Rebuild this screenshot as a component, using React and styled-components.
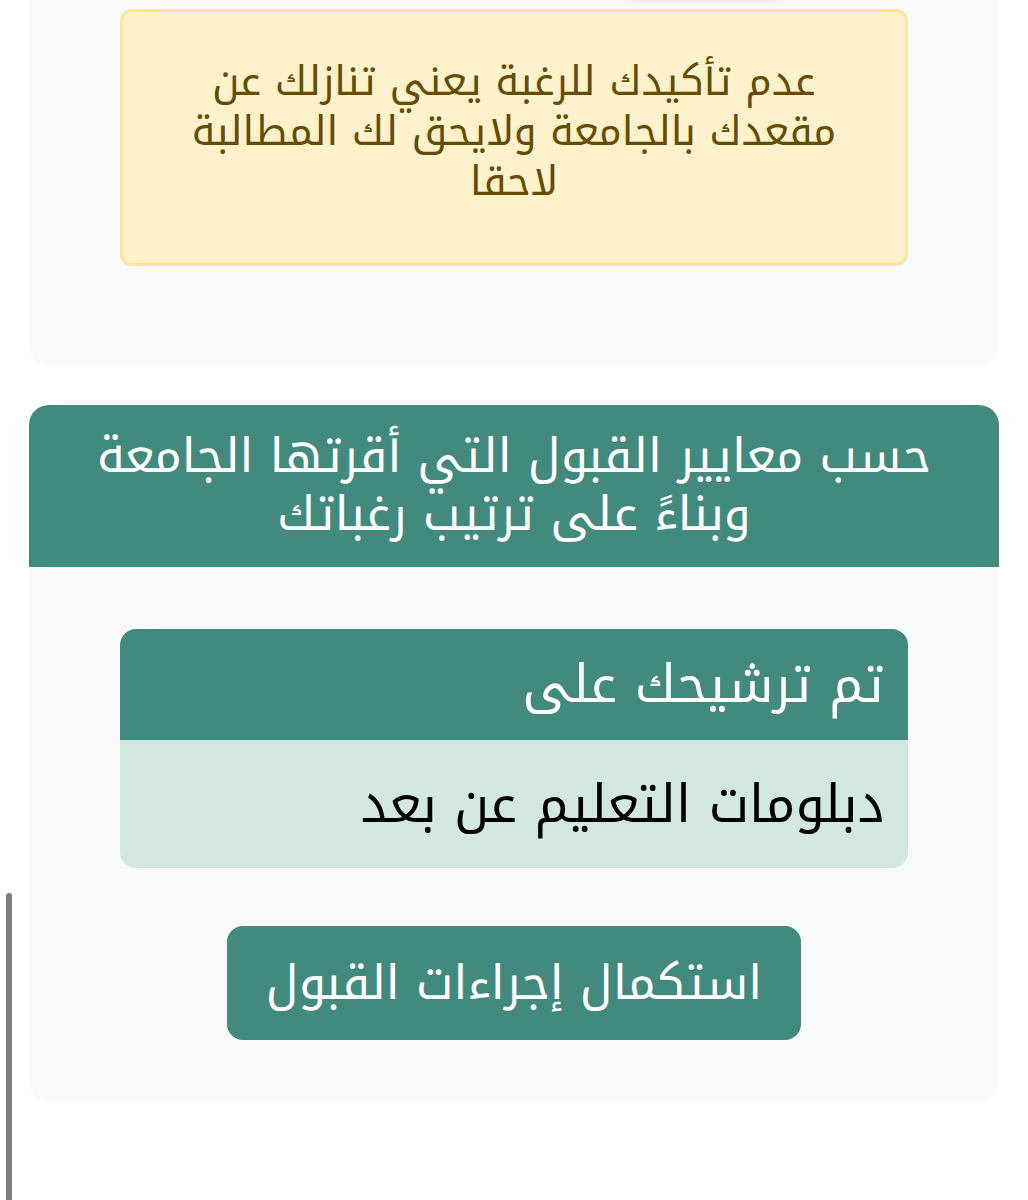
import styled, { createGlobalStyle } from 'styled-components';

const font = `"Noto Kufi Arabic", "DejaVu Sans", sans-serif`;

const GlobalStyle = createGlobalStyle`
  html, body {
    margin: 0;
    padding: 0;
    background: #ffffff;
  }
  body {
    font-family: ${font};
    direction: rtl;
    overflow: hidden;
  }
`;

const Page = styled.div`
  width: 1028px;
  height: 1200px;
  box-sizing: border-box;
  padding: 0 29px;
  display: flex;
  flex-direction: column;
  gap: 39px;
  position: relative;
`;

const Card = styled.div`
  background: #f8f9fb;
  border-radius: 20px;
  box-sizing: border-box;
`;

const TopCard = styled(Card)`
  margin-top: -60px;
  padding: 0 91px 100px;
  display: flex;
  flex-direction: column;
  align-items: center;
`;

const HiddenButton = styled.div`
  width: 160px;
  height: 56px;
  margin-left: 380px;
  margin-bottom: 13px;
  background: #f3f4f7;
  border-radius: 10px;
  box-shadow: 0 3px 6px rgba(0, 0, 0, 0.18);
`;

const Alert = styled.div`
  align-self: stretch;
  background: #fef2cc;
  border: 3px solid #fde59c;
  border-radius: 12px;
  padding: 45px 50px 56px;
  color: #664d03;
  font-size: 40.5px;
  line-height: 50px;
  text-align: center;
`;

const ResultCard = styled.div`
  display: flex;
  flex-direction: column;
`;

const ResultHeader = styled.div`
  background: #438a7e;
  color: #ffffff;
  border-radius: 20px 20px 0 0;
  padding: 22px 40px 24px;
  font-size: 48px;
  line-height: 58px;
  text-align: center;
`;

const ResultBody = styled(Card)`
  border-radius: 0 0 20px 20px;
  padding: 62px 91px 62px;
  display: flex;
  flex-direction: column;
  align-items: center;
  gap: 58px;
`;

const Choice = styled.div`
  align-self: stretch;
  border-radius: 16px;
  overflow: hidden;
  display: flex;
  flex-direction: column;
`;

const ChoiceRow = styled.div`
  height: ${p => p.$h}px;
  display: flex;
  align-items: center;
  padding: 0 24px;
  background: ${p => (p.$head ? '#438a7e' : '#d2e7dd')};
  color: ${p => (p.$head ? '#ffffff' : '#000000')};
  font-size: 52px;
`;

const ActionButton = styled.button`
  width: 574px;
  height: 114px;
  border: none;
  border-radius: 16px;
  background: #438a7e;
  color: #ffffff;
  font-family: ${font};
  font-size: 48px;
  cursor: pointer;
`;

const ScrollThumb = styled.div`
  position: absolute;
  left: 6px;
  top: 893px;
  width: 6px;
  height: 320px;
  border-radius: 3px;
  background: #7d7d7d;
`;

export default function App() {
  return (
    <>
      <GlobalStyle />
      <Page>
        <TopCard>
          <HiddenButton />
          <Alert>
            عدم تأكيدك للرغبة يعني تنازلك عن مقعدك بالجامعة ولايحق لك المطالبة لاحقا
          </Alert>
        </TopCard>
        <ResultCard>
          <ResultHeader>
            حسب معايير القبول التي أقرتها الجامعة وبناءً على ترتيب رغباتك
          </ResultHeader>
          <ResultBody>
            <Choice>
              <ChoiceRow $head $h={111}>تم ترشيحك على</ChoiceRow>
              <ChoiceRow $h={128}>دبلومات التعليم عن بعد</ChoiceRow>
            </Choice>
            <ActionButton>استكمال إجراءات القبول</ActionButton>
          </ResultBody>
        </ResultCard>
        <ScrollThumb />
      </Page>
    </>
  );
}
